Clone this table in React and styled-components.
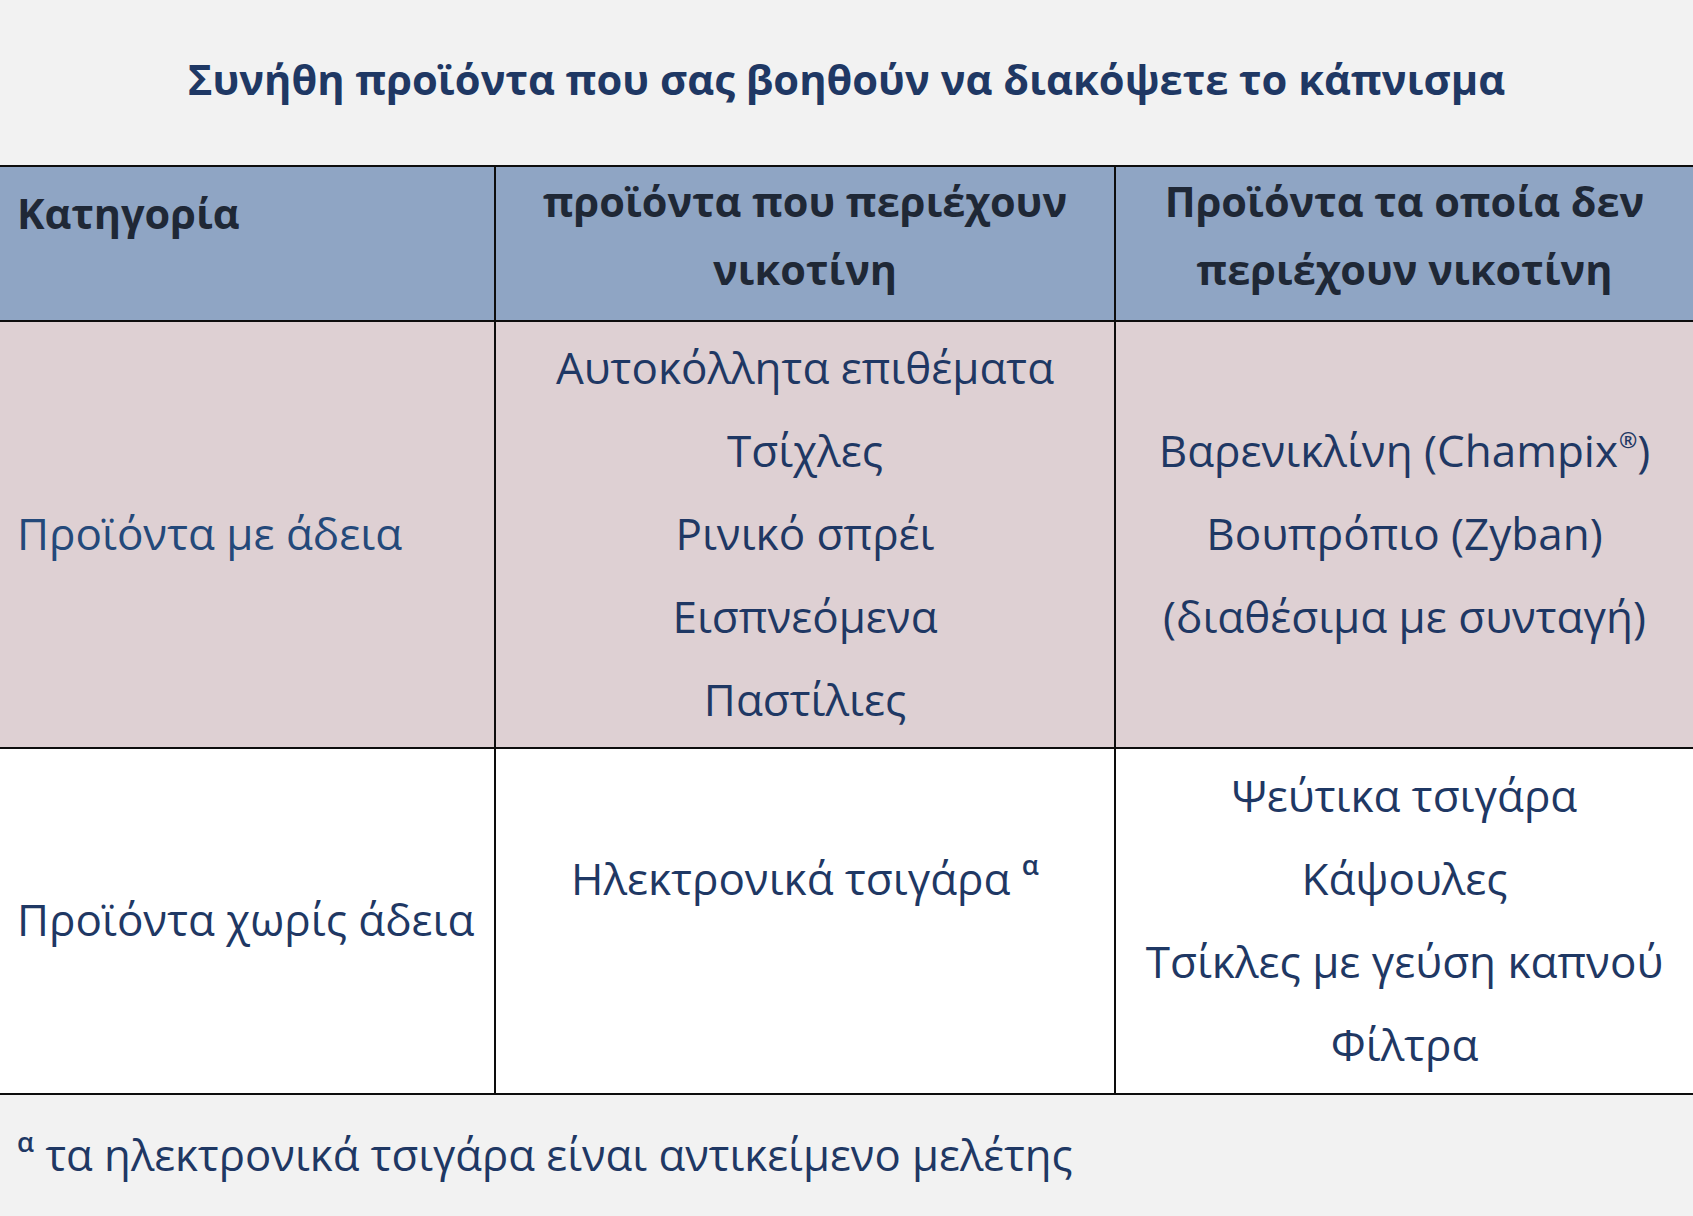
import React from "react";
import styled, { createGlobalStyle } from "styled-components";

const GlobalStyle = createGlobalStyle`
  * { box-sizing: border-box; }
  body {
    margin: 0;
    background: #f2f2f2;
    font-family: "Open Sans", "Noto Sans", sans-serif;
  }
`;

const Page = styled.div`
  width: 1693px;
  min-height: 1216px;
  background: #f2f2f2;
  display: flex;
  flex-direction: column;
`;

const Title = styled.h1`
  height: 165px;
  margin: 0;
  padding-bottom: 8px;
  display: flex;
  align-items: center;
  justify-content: center;
  font-size: 41.7px;
  font-weight: 700;
  color: #1f3864;
`;

const Table = styled.div`
  display: grid;
  grid-template-columns: 496px 620px 1fr;
  grid-template-rows: 155px 427px 346px;
  border-top: 2px solid #0d0d0d;
`;

const Cell = styled.div`
  background: ${(p) => p.$bg};
  border-bottom: 2px solid #0d0d0d;
  border-right: ${(p) => (p.$last ? "none" : "2px solid #0d0d0d")};
  display: flex;
  flex-direction: column;
  justify-content: ${(p) => (p.$top ? "flex-start" : "center")};
  align-items: ${(p) => (p.$left ? "flex-start" : "center")};
  padding: ${(p) => (p.$top ? p.$pt || 0 : 0)}px 6px
    ${(p) => (p.$top ? 0 : 3)}px ${(p) => (p.$left ? 17 : 6)}px;
  color: ${(p) => p.$color || "#1f3864"};
`;

const HeadLine = styled.div`
  font-size: 41.5px;
  font-weight: 700;
  line-height: 68px;
  color: #1f2836;
  white-space: nowrap;
`;

const Line = styled.div`
  font-size: 44px;
  line-height: 83px;
  white-space: nowrap;
`;

const Sup = styled.sup`
  font-size: ${(p) => (p.$small ? "0.5em" : "0.62em")};
  font-weight: 600;
  line-height: 0;
  vertical-align: ${(p) => (p.$small ? "0.85em" : "0.72em")};
  margin-left: ${(p) => p.$gap || 0}px;
`;

const Footer = styled.div`
  flex: 1;
  display: flex;
  align-items: center;
  padding-left: 17px;
  padding-bottom: 3px;
  color: #1f3864;
`;

const FootText = styled.span`
  font-size: 43.7px;
  white-space: nowrap;
`;

const HEAD = "#8fa5c4";
const PINK = "#ded0d3";
const WHITE = "#ffffff";

export default function App() {
  return (
    <Page>
      <GlobalStyle />
      <Title>Συνήθη προϊόντα που σας βοηθούν να διακόψετε το κάπνισμα</Title>
      <Table>
        <Cell $bg={HEAD} $top $left $pt={12}>
          <HeadLine>Κατηγορία</HeadLine>
        </Cell>
        <Cell $bg={HEAD} $top>
          <HeadLine>προϊόντα που περιέχουν</HeadLine>
          <HeadLine>νικοτίνη</HeadLine>
        </Cell>
        <Cell $bg={HEAD} $top $last>
          <HeadLine>Προϊόντα τα οποία δεν</HeadLine>
          <HeadLine>περιέχουν νικοτίνη</HeadLine>
        </Cell>

        <Cell $bg={PINK} $left $color="#24497a">
          <Line>Προϊόντα με άδεια</Line>
        </Cell>
        <Cell $bg={PINK}>
          <Line>Αυτοκόλλητα επιθέματα</Line>
          <Line>Τσίχλες</Line>
          <Line>Ρινικό σπρέι</Line>
          <Line>Εισπνεόμενα</Line>
          <Line>Παστίλιες</Line>
        </Cell>
        <Cell $bg={PINK} $last>
          <Line>
            Βαρενικλίνη (Champix<Sup $small $gap={1}>®</Sup>)
          </Line>
          <Line>Βουπρόπιο (Zyban)</Line>
          <Line>(διαθέσιμα με συνταγή)</Line>
        </Cell>

        <Cell $bg={WHITE} $left>
          <Line>Προϊόντα χωρίς άδεια</Line>
        </Cell>
        <Cell $bg={WHITE}>
          <Line>
            Ηλεκτρονικά τσιγάρα <Sup>α</Sup>
          </Line>
          <Line>&nbsp;</Line>
        </Cell>
        <Cell $bg={WHITE} $last>
          <Line>Ψεύτικα τσιγάρα</Line>
          <Line>Κάψουλες</Line>
          <Line>Τσίκλες με γεύση καπνού</Line>
          <Line>Φίλτρα</Line>
        </Cell>
      </Table>
      <Footer>
        <FootText>
          <Sup>α</Sup> τα ηλεκτρονικά τσιγάρα είναι αντικείμενο μελέτης
        </FootText>
      </Footer>
    </Page>
  );
}
